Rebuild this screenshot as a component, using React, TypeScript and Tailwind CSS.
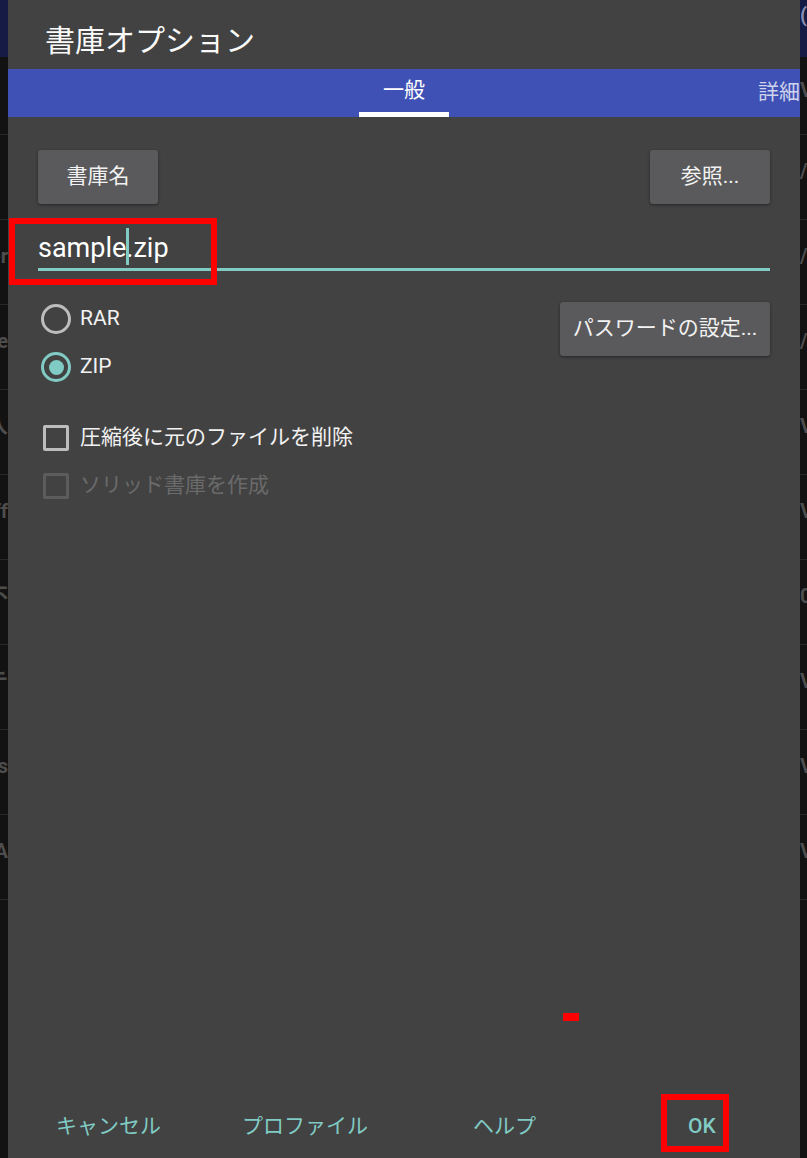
const font = "font-['Roboto','Noto_Sans_CJK_JP',sans-serif]";

const leftRows = ["", "", "Ver", "e", "入", "Off", "不", "テ", "ls", "TA"];
const rightRows = ["V", "/", "/", "/", "V", "V", "0", "V", "V", "V"];

function Strip({ side }: { side: "left" | "right" }) {
  const rows = side === "left" ? leftRows : rightRows;
  return (
    <div className="flex flex-col h-full overflow-hidden bg-[#121212]">
      <div className="h-[57px] shrink-0 bg-[#161b45] flex items-start">
        {side === "right" && (
          <span className="text-[#8a8fb5] text-[20px] leading-[30px] font-bold">(</span>
        )}
      </div>
      {rows.map((t, i) => (
        <div
          key={i}
          className={`${i === 0 ? "h-[78px]" : "h-[85px]"} shrink-0 border-b border-[#272727] flex items-center pb-3 ${
            side === "left" ? "justify-end" : "justify-start"
          }`}
        >
          <span className="whitespace-nowrap text-[20px] font-bold text-[#4d4d4d]">{t}</span>
        </div>
      ))}
    </div>
  );
}

function Btn({ label, className = "" }: { label: string; className?: string }) {
  return (
    <div
      className={`h-[54px] rounded-[3px] bg-[#5a5a5c] shadow-[0_1px_3px_rgba(0,0,0,0.45)] flex items-center justify-center text-[21px] text-[#f2f2f2] ${className}`}
    >
      {label}
    </div>
  );
}

function Radio({ label, checked }: { label: string; checked?: boolean }) {
  return (
    <div className="h-[48px] flex items-center">
      <div
        className={`ml-[3px] w-[30px] h-[30px] rounded-full border-[3px] flex items-center justify-center ${
          checked ? "border-[#80cbc4]" : "border-[#bdbdbd]"
        }`}
      >
        {checked && <div className="w-[15px] h-[15px] rounded-full bg-[#80cbc4]" />}
      </div>
      <span className="ml-[9px] text-[21px] text-[#f2f2f2]">{label}</span>
    </div>
  );
}

function Check({ label, disabled }: { label: string; disabled?: boolean }) {
  return (
    <div className="h-[48px] flex items-center">
      <div
        className={`ml-[5px] w-[26px] h-[26px] rounded-[2px] border-[3px] ${
          disabled ? "border-[#5c5c5c]" : "border-[#bdbdbd]"
        }`}
      />
      <span className={`ml-[11px] text-[21px] ${disabled ? "text-[#6a6a6a]" : "text-[#f2f2f2]"}`}>
        {label}
      </span>
    </div>
  );
}

export default function App() {
  return (
    <div className={`flex w-[807px] h-[1158px] overflow-hidden bg-[#121212] ${font}`}>
      <div className="w-[8px] shrink-0">
        <Strip side="left" />
      </div>

      <div className="relative w-[792px] shrink-0 h-full bg-[#424242] flex flex-col">
        <div className="h-[69px] shrink-0 pl-[37px] pt-[24px]">
          <h1 className="text-[30px] leading-[34px] text-[#fafafa]">書庫オプション</h1>
        </div>

        <div className="h-[48px] shrink-0 bg-[#3f51b5] flex overflow-hidden">
          <div className="ml-[351px] w-[90px] shrink-0 flex flex-col">
            <div className="flex-1 flex items-center justify-center text-[21px] text-white">一般</div>
            <div className="h-[5px] bg-white" />
          </div>
          <div className="ml-[309px] shrink-0 flex items-center text-[21px] text-white/75 whitespace-nowrap">
            詳細
          </div>
        </div>

        <div className="px-[30px] pt-[33px]">
          <div className="flex justify-between">
            <Btn label="書庫名" className="w-[120px]" />
            <Btn label="参照..." className="w-[120px]" />
          </div>

          <div className="relative mt-[26px]">
            <div className="text-[27px] leading-[36px] text-white">sample.zip</div>
            <div className="absolute left-[88px] top-[-2px] w-[3px] h-[37px] bg-[#80cbc4]" />
            <div className="mt-[2px] h-[3px] bg-[#80cbc4]" />
            <div className="absolute left-[-29px] top-[-12px] w-[208px] h-[67px] border-[6px] border-[#ff0000]" />
          </div>

          <div className="mt-[24px] flex justify-between items-start">
            <div className="flex flex-col">
              <Radio label="RAR" />
              <Radio label="ZIP" checked />
            </div>
            <Btn label="パスワードの設定..." className="mt-[7px] w-[210px]" />
          </div>

          <div className="mt-[23px] flex flex-col">
            <Check label="圧縮後に元のファイルを削除" />
            <Check label="ソリッド書庫を作成" disabled />
          </div>
        </div>

        <div className="flex-1" />

        <div className="h-[64px] shrink-0 flex items-center text-[21px] leading-[24px] text-[#80cbc4]">
          <span className="ml-[48px] w-[186px]">キャンセル</span>
          <span className="w-[231px]">プロファイル</span>
          <span className="w-[215px]">ヘルプ</span>
          <span className="relative font-medium">
            OK
            <span className="absolute left-[-27px] top-[-20px] w-[68px] h-[58px] border-[6px] border-[#ff0000]" />
          </span>
        </div>

        <div className="absolute left-[555px] top-[1013px] w-[16px] h-[8px] bg-[#ff0000]" />
      </div>

      <div className="flex-1">
        <Strip side="right" />
      </div>
    </div>
  );
}
